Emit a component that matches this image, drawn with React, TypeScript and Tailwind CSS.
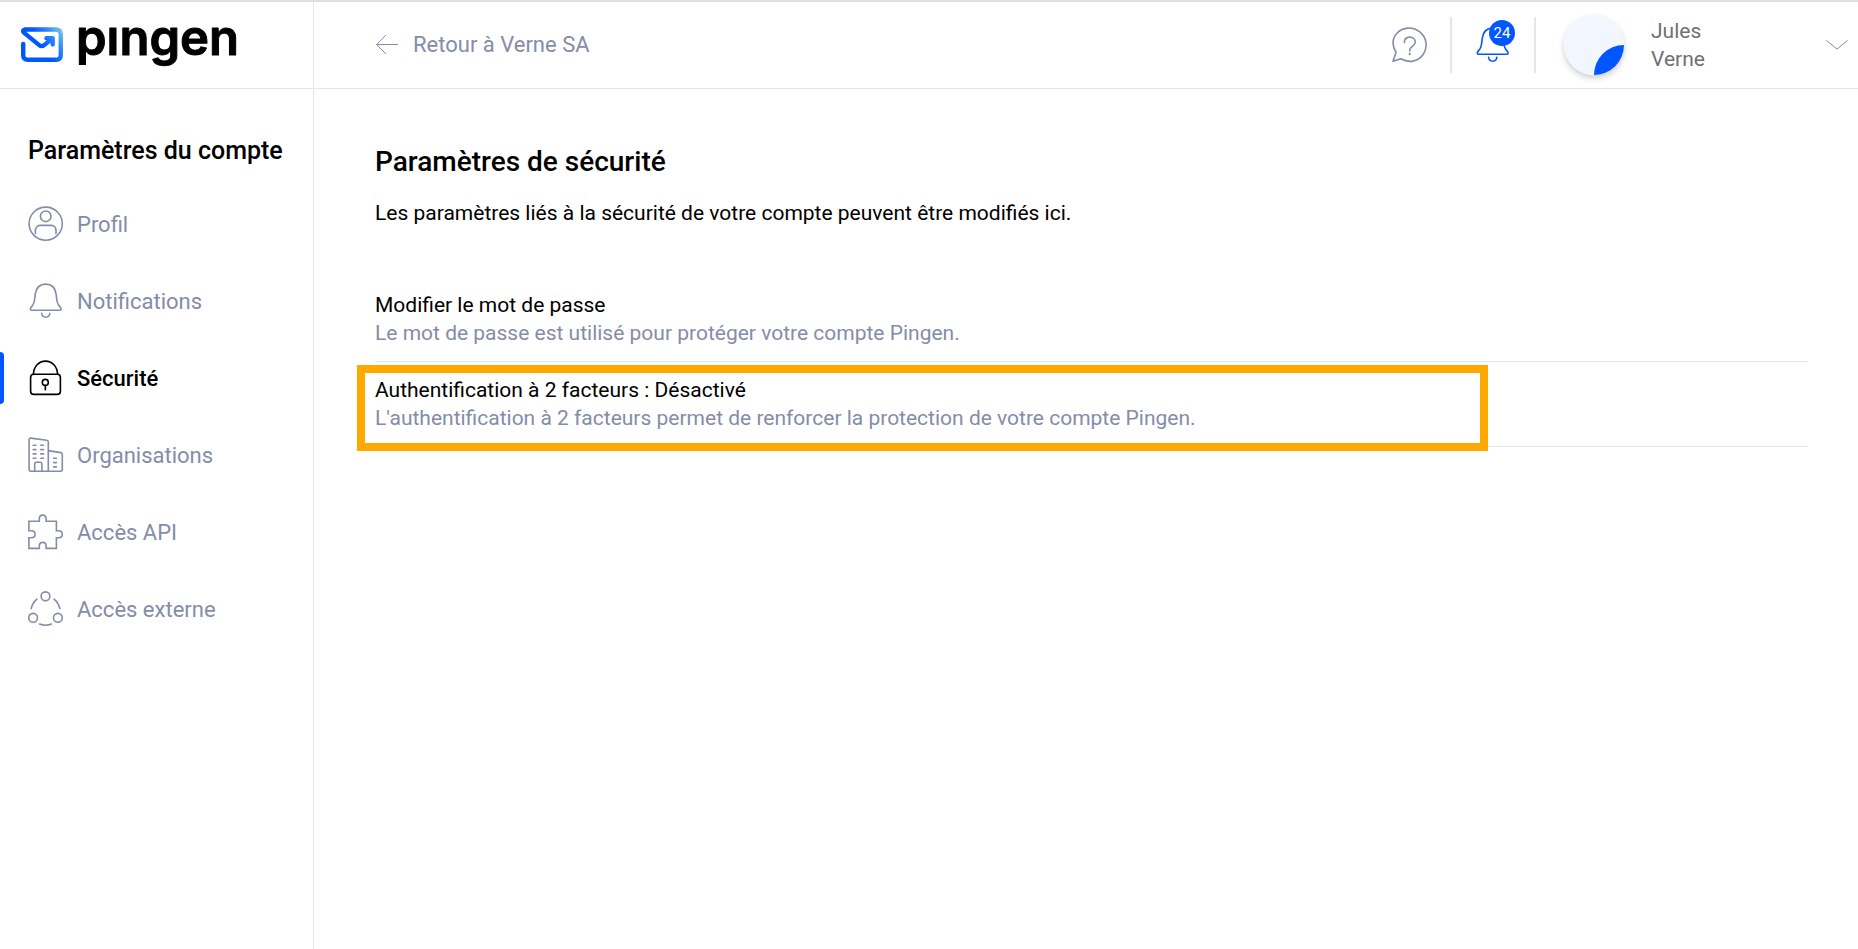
import type { ReactNode } from "react";

const Icon = ({ children }: { children: ReactNode }) => (
  <svg
    className="size-9 shrink-0"
    viewBox="0 0 36 36"
    fill="none"
    stroke="currentColor"
    strokeWidth="1.6"
    strokeLinecap="round"
    strokeLinejoin="round"
    aria-hidden="true"
  >
    {children}
  </svg>
);

const ProfileIcon = () => (
  <Icon>
    <circle cx="17.7" cy="17.7" r="16.6" />
    <circle cx="17.7" cy="10.3" r="5.3" />
    <path d="M7.4 27.6V25c0-3.2 1.8-5.6 4.6-5.6h11.4c2.8 0 4.6 2.4 4.6 5.6v2.6" />
  </Icon>
);

const BellIcon = () => (
  <Icon>
    <path d="M17.7 1.1C11.2 1.1 8 5.4 7.2 11.3c-.6 4.8-.3 7.8-2.2 10.6-1.1 1.6-2.7 2.6-2.7 4 0 .9.7 1.4 1.5 1.4h27.8c.8 0 1.5-.5 1.5-1.4 0-1.4-1.6-2.4-2.7-4-1.9-2.8-1.6-5.8-2.2-10.6C27.4 5.4 24.2 1.1 17.7 1.1z" />
    <path d="M13.6 30.3c.2 2.5 1.8 3.9 4.1 3.9s3.9-1.4 4.1-3.9" />
  </Icon>
);

const LockIcon = () => (
  <Icon>
    <rect x="2.6" y="14.2" width="29.8" height="20.2" rx="3.2" />
    <path d="M5.4 14C5.8 6.6 10.8 1.1 17.5 1.1S29.2 6.6 29.6 14" />
    <circle cx="17.3" cy="22.4" r="3" />
    <path d="M17.3 25.4v5" strokeLinecap="butt" />
  </Icon>
);

const BuildingIcon = () => (
  <Icon>
    <path d="M20.3 34.3V5c0-1-.6-1.6-1.6-1.7L3 1.1c-1.1-.1-1.9.5-1.9 1.5v29.7c0 1.2.8 2 2 2h29.2c1.2 0 2-.8 2-2V17.4c0-1-.6-1.6-1.6-1.8l-12.4-2" />
    <path d="M6.7 34.3v-7.4c0-1 .7-1.7 1.7-1.7h3.8c1 0 1.7.7 1.7 1.7v7.4" />
    <path d="M5.2 8.3h2.7M12.8 8.3h2.7M5.2 12.6h2.7M12.8 12.6h2.7M5.2 16.9h2.7M12.8 16.9h2.7M5.2 21.3h2.7M12.8 21.3h2.7M25.7 21.3h2.7M25.7 25.6h2.7M25.7 29.9h2.7" />
  </Icon>
);

const PuzzleIcon = () => (
  <Icon>
    <path
      strokeLinejoin="miter"
      d="M.9 7.2h10.4V5c0-2.3 1.3-3.9 3.4-3.9S18.1 2.7 18.1 5v2.2h10.3v9.5h2.1c2.2 0 3.8 1.3 3.8 3.5s-1.6 3.5-3.8 3.5h-2.1v10.7H18.1v-2.3c0-2.2-1.3-3.7-3.4-3.7s-3.4 1.5-3.4 3.7v2.3H.9V23.7h2.3c2.2 0 3.9-1.3 3.9-3.5s-1.7-3.5-3.9-3.5H.9z"
    />
  </Icon>
);

const ShareIcon = () => (
  <Icon>
    <circle cx="17.5" cy="5.3" r="4.4" />
    <circle cx="5.1" cy="26.8" r="4.4" />
    <circle cx="29.9" cy="26.8" r="4.4" />
    <path d="M8.9 8.2c-3 2.5-4.9 5.8-5.7 9.5M26.1 8.2c3 2.5 4.9 5.8 5.7 9.5M11.6 33c3.9 1.6 7.9 1.6 11.8 0" />
  </Icon>
);

const HelpIcon = () => (
  <Icon>
    <path d="M1 34.2l3-8.8C-.3 17.8.4 11 5.2 6 11-.1 20.3-.4 27.2 4.3c7.6 5.8 9 15.6 4 23.2-5.6 7.6-14.5 8.6-22.5 4.3z" />
    <path d="M12.4 15.4c0-3.3 2.2-5.3 5.4-5.3s5.5 2 5.5 5c0 4.2-5.6 4-5.6 8.4v.4" />
    <path d="M17.7 26.8v.4" strokeWidth="2" />
  </Icon>
);

const Logo = () => (
  <svg className="h-[86px] w-[230px]" viewBox="0 0 230 86" role="img" aria-label="Pingen">
    <defs>
      <linearGradient id="envelope" gradientUnits="userSpaceOnUse" x1="22" y1="42" x2="42" y2="28">
        <stop offset="0" stopColor="#0057ff" />
        <stop offset="0.5" stopColor="#2a86f8" />
        <stop offset="1" stopColor="#78cbe0" />
      </linearGradient>
    </defs>
    <g
      fill="none"
      stroke="url(#envelope)"
      strokeWidth="4.4"
      strokeLinecap="round"
      strokeLinejoin="round"
    >
      <path d="M3.2 42v11q0 4.8 4.8 4.8h28q4.8 0 4.8-4.8V32.3q0-4.8-4.8-4.8H4.6q-2.8.9-.4 3.4l15 12.2q2.5 2 5 0l7.8-6.3" />
      <path d="M26.5 36.2h6.2v6.2" />
    </g>
    <text
      x="56"
      y="53"
      fontFamily="Inter, sans-serif"
      fontSize="49"
      fontWeight="600"
      fill="#000"
      stroke="#000"
      strokeWidth="1"
      strokeLinejoin="round"
    >
      pıngen
    </text>
  </svg>
);

const menu = [
  { label: "Profil", icon: <ProfileIcon /> },
  { label: "Notifications", icon: <BellIcon /> },
  { label: "Sécurité", icon: <LockIcon />, active: true },
  { label: "Organisations", icon: <BuildingIcon /> },
  { label: "Accès API", icon: <PuzzleIcon /> },
  { label: "Accès externe", icon: <ShareIcon /> },
];

const Header = () => (
  <header className="flex h-[87px] border-b border-[#e6e6e6]">
    <a href="#" className="flex w-[314px] shrink-0 items-center border-r border-[#e6e6e6] pl-5">
      <Logo />
    </a>
    <div className="flex grow items-center pl-[62px]">
      <a href="#" className="flex items-center gap-[15px] text-[22px] leading-7 text-[#858ca9]">
        <svg className="h-5 w-[22px]" viewBox="0 0 22 20" fill="none" stroke="currentColor" aria-hidden="true">
          <path d="M22 9.5H.7M10 0L.7 9.5 10 19" />
        </svg>
        Retour à Verne SA
      </a>
      <div className="mr-2.5 ml-auto flex items-center">
        <button type="button" aria-label="Aide" className="mr-[22px] text-[#858ca9]">
          <HelpIcon />
        </button>
        <div className="h-14 w-0.5 bg-[#e6e6e6]" />
        <button type="button" aria-label="Notifications" className="relative mx-[23px] text-[#0057ff]">
          <BellIcon />
          <span className="absolute -top-[7px] left-[14px] flex size-[26px] items-center justify-center rounded-full bg-[#0057ff] text-[15px] leading-4 text-white">
            24
          </span>
        </button>
        <div className="h-14 w-0.5 bg-[#e6e6e6]" />
        <button type="button" className="ml-7 flex w-[284px] items-center text-left">
          <span className="size-[60px] shrink-0 rounded-full shadow-[0_3px_6px_rgba(0,0,0,0.2)]">
            <svg viewBox="0 0 60 60" aria-hidden="true">
              <circle cx="30" cy="30" r="30" fill="#f1f6ff" />
              <path d="M60 30A30 30 0 0 1 30 60 30 30 0 0 1 60 30z" fill="#0057ff" />
            </svg>
          </span>
          <span className="ml-[27px] text-[21px] leading-7 text-[#707070]">
            Jules
            <br />
            Verne
          </span>
          <svg
            className="ml-auto h-2.5 w-[22px]"
            viewBox="0 0 22 10"
            fill="none"
            stroke="#858ca9"
            aria-hidden="true"
          >
            <path d="M.5.5L11 9 21.5.5" />
          </svg>
        </button>
      </div>
    </div>
  </header>
);

const Sidebar = () => (
  <aside className="w-[314px] shrink-0 border-r border-[#e6e6e6] pt-[46px]">
    <h2 className="pl-7 text-[25px] leading-8 font-medium whitespace-nowrap">Paramètres du compte</h2>
    <nav className="mt-[31px] flex flex-col gap-[25px]">
      {menu.map((item) => (
        <a
          key={item.label}
          href="#"
          className={
            item.active
              ? "relative flex h-[52px] items-center gap-[13px] pl-7 text-[22px] font-medium text-black"
              : "relative flex h-[52px] items-center gap-[13px] pl-7 text-[22px] text-[#858ca9]"
          }
        >
          {item.active && <span className="absolute inset-y-0 left-0 w-1 rounded-r bg-[#0057ff]" />}
          {item.icon}
          {item.label}
        </a>
      ))}
    </nav>
  </aside>
);

const App = () => {
  return (
    <div className="flex min-h-screen flex-col border-t-2 border-[#e0e0e0] bg-white font-[Roboto,sans-serif] text-black">
      <Header />
      <div className="flex grow">
        <Sidebar />
        <main className="grow pt-[57px] pr-[50px] pl-[61px] text-[21px] leading-7">
          <h1 className="text-[28px] leading-8 font-medium">Paramètres de sécurité</h1>
          <p className="mt-[21px]">
            Les paramètres liés à la sécurité de votre compte peuvent être modifiés ici.
          </p>
          <div className="mt-[50px]">
            <a href="#" className="block border-b border-[#e6e6e6] py-[14px]">
              <div>Modifier le mot de passe</div>
              <div className="text-[#858ca9]">
                Le mot de passe est utilisé pour protéger votre compte Pingen.
              </div>
            </a>
            <a href="#" className="relative block border-b border-[#e6e6e6] py-[14px]">
              <div>Authentification à 2 facteurs : Désactivé</div>
              <div className="text-[#858ca9]">
                L'authentification à 2 facteurs permet de renforcer la protection de votre compte Pingen.
              </div>
              <span className="absolute top-[3px] right-[320px] -bottom-[5px] -left-[18px] border-8 border-[#ffa900]" />
            </a>
          </div>
        </main>
      </div>
    </div>
  );
};

export default App;
